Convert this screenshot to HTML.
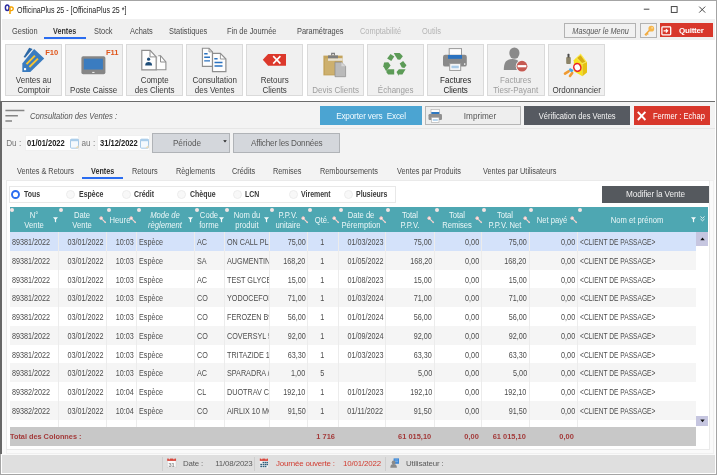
<!DOCTYPE html><html><head><meta charset="utf-8"><title>OfficinaPlus 25</title><style>*{box-sizing:border-box;margin:0;padding:0}
html,body{width:717px;height:475px;overflow:hidden;background:#fff;font-family:"Liberation Sans",sans-serif;}
body{position:relative;font-size:8px;color:#444;will-change:transform}
.abs{position:absolute}
.t{position:absolute;white-space:nowrap;line-height:10px}
/* window frame */
#frame{position:absolute;left:0;top:0;width:717px;height:475px;border:1px solid #a4a4a4;pointer-events:none;z-index:50}
#lbar{position:absolute;left:0;top:101px;width:1.600px;height:353px;background:#686868;z-index:51}
#title{position:absolute;left:17px;top:5px;transform:scaleX(.82);transform-origin:0 50%;font-size:8.6px;color:#222;line-height:11px;white-space:nowrap}
#menubar{position:absolute;left:2px;top:19px;width:713px;height:21.200px;background:#f0f0f0}
.mt{position:absolute;top:25.800px;transform:scaleX(.885);transform-origin:0 50%;font-size:8.4px;color:#4a4a4a;line-height:11px;white-space:nowrap}
.mt.dis{color:#b4b4b4}
.tb{position:absolute;top:43.600px;width:57.300px;height:52.700px;background:#f0f0f0;border:1px solid #dadada}
.tb .lb{position:absolute;left:-10px;right:-10px;text-align:center;font-size:9.3px;line-height:9.9px;color:#3a3a3a;white-space:nowrap;transform:scaleX(.86)}
.tb.dis .lb{color:#9d9d9d}
.tb svg{position:absolute}
.fk{position:absolute;right:3px;top:4.5px;font-size:7.6px;font-weight:bold;color:#e0561b;line-height:8px}
#child{position:absolute;left:1px;top:101px;width:714px;height:354px;background:#f3f3f3;border-top:1px solid #6b6b6b}
.btn{position:absolute;text-align:center;white-space:nowrap;font-size:8.3px}
.row{position:absolute;left:9.5px;width:686px}
.row.sel{background:#d4e2fa}
.row.alt{background:#f5f5f5}
.row.wh{background:#fff}
.cell{position:absolute;top:0;height:100%;line-height:20.6px;font-size:8.3px;color:#4c4c4c;white-space:nowrap;overflow:hidden}
.cell.c{text-align:center}
.cell.l{text-align:left;padding-left:2.8px}
.cell.r{text-align:right;padding-right:1.9px}
.cell.clip{overflow:hidden}
.vsep{position:absolute;width:1px;background:#ececec}
.hd{position:absolute;top:207.3px;height:24.6px;color:#eaf6f7;font-size:8.3px;line-height:10.4px;text-align:center;white-space:nowrap}
.hd span{display:block;transform:scaleX(.92)}
.dot{position:absolute;top:208.100px;width:4px;height:4px;border-radius:50%;background:#f4e4e4}
.radio{position:absolute;top:189.9px;width:8.6px;height:8.6px;border-radius:50%;border:1px solid #e9e9e9;background:#fbfbfb}
.radio.on{border:2px solid #2d6df0;background:#fff}
.rl{position:absolute;top:190px;transform:scaleX(.85);transform-origin:0 50%;font-size:8.2px;font-weight:bold;color:#3a3a3a;line-height:10px;white-space:nowrap}
.st{position:absolute;top:458.700px;letter-spacing:-0.15px;font-size:7.9px;line-height:10px;color:#5a5a5a;white-space:nowrap}
.st.red{color:#d13b2f}
.tab{position:absolute;top:166.100px;transform:scaleX(.875);transform-origin:0 50%;font-size:8.4px;line-height:11px;color:#4a4a4a;white-space:nowrap}
.tot{font-size:8px;font-weight:bold;color:#a33a3a}

.cell i{display:inline-block;font-style:normal;transform:scaleX(.87);white-space:nowrap}
.cell.l i{transform-origin:0 50%}
.cell.r i{transform-origin:100% 50%}
.cell.c i{transform-origin:50% 50%}
</style></head><body>
<div id="menubar"></div>
<!-- title bar -->
<svg class="abs" style="left:3px;top:3px" width="13" height="13" viewBox="3 3 13 13"><ellipse cx="7.250" cy="7.700" rx="1.850" ry="2.750" fill="none" stroke="#2a2a9e" stroke-width="1.500"/><path d="M10 13.900V7.200" stroke="#f5a300" stroke-width="1.500" fill="none"/><path d="M10 7h1.400a1.800 1.800 0 0 1 0 3.600H10" stroke="#f5a300" stroke-width="1.400" fill="none"/></svg>
<div id="title">OfficinaPlus 25 - [OfficinaPlus 25 *]</div>
<svg class="abs" style="left:640px;top:3px" width="70" height="14" viewBox="0 0 70 14"><path d="M3.8 6.2h5.6" stroke="#333" stroke-width="0.9"/><rect x="31.3" y="3.6" width="5.8" height="5.8" fill="none" stroke="#333" stroke-width="0.9"/><path d="M59.2 3.6l6 6M65.2 3.6l-6 6" stroke="#333" stroke-width="0.9"/></svg>
<!-- menu tabs -->
<div class="mt" style="left:11.5px">Gestion</div>
<div class="mt" style="left:53px;font-weight:bold;color:#3a3a3a;transform:scaleX(.86)">Ventes</div>
<div class="abs" style="left:44px;top:37.4px;width:41.5px;height:2.1px;background:#2a6cf0"></div>
<div class="mt" style="left:93.6px">Stock</div>
<div class="mt" style="left:129.6px">Achats</div>
<div class="mt" style="left:169px">Statistiques</div>
<div class="mt" style="left:227px">Fin de Journée</div>
<div class="mt" style="left:297px">Paramétrages</div>
<div class="mt dis" style="left:360px">Comptabilité</div>
<div class="mt dis" style="left:422px">Outils</div>
<div class="btn" style="left:564px;top:23px;width:72.3px;height:14.8px;background:#f1f1f1;border:1px solid #b2b2b2;font-style:italic;color:#555;line-height:14.9px;font-size:8.7px"><span style="display:inline-block;transform:scaleX(.84)">Masquer le Menu</span></div>
<div class="btn" style="left:640px;top:23px;width:16.6px;height:14.8px;background:#f1f1f1;border:1px solid #b2b2b2"><svg class="abs" style="left:1.500px;top:1px" width="12" height="12" viewBox="0 0 12 12"><circle cx="8.300" cy="3.700" r="2.900" fill="#f6b64c"/><circle cx="9.100" cy="2.900" r=".8" fill="#fbe3b4"/><path d="M6.400 5.600L1.900 10.100M3.900 8.200l1.400 1.300M2.600 9.400l1 1" stroke="#f2a838" stroke-width="1.400" fill="none"/></svg></div>
<div class="btn" style="left:659.6px;top:22.6px;width:53.3px;height:14.8px;background:#d8372b;color:#fff;font-weight:bold;line-height:15.2px;font-size:8px;letter-spacing:-0.25px;text-align:left;padding-left:19.5px">Quitter<svg class="abs" style="left:1.800px;top:3px" width="11" height="10" viewBox="0 0 11 10"><rect x=".9" y=".9" width="8.800" height="7.900" rx=".8" fill="none" stroke="#fff" stroke-width="1.300"/><path d="M2.600 4.850h3.800M4.900 3.100l1.800 1.750-1.800 1.750" fill="none" stroke="#fff" stroke-width="1.100"/></svg></div>
<!-- toolbar buttons -->
<div class="tb" style="left:5px"><span class="fk">F10</span>
 <div class="lb" style="top:31.100px">Ventes au<br>Comptoir</div></div>
<div class="tb" style="left:65.3px"><span class="fk">F11</span>
 <div class="lb" style="top:41px">Poste Caisse</div></div>
<div class="tb" style="left:125.6px">
 <div class="lb" style="top:31.100px">Compte<br>des Clients</div></div>
<div class="tb" style="left:185.9px">
 <div class="lb" style="top:31.100px">Consultation<br>des Ventes</div></div>
<div class="tb" style="left:246.2px">
 <div class="lb" style="top:31.100px">Retours<br>Clients</div></div>
<div class="tb dis" style="left:306.5px">
 <div class="lb" style="top:41px">Devis Clients</div></div>
<div class="tb dis" style="left:366.8px">
 <div class="lb" style="top:41px">Échanges</div></div>
<div class="tb" style="left:427.1px">
 <div class="lb" style="top:31.100px;color:#222">Factures<br>Clients</div></div>
<div class="tb dis" style="left:487.4px">
 <div class="lb" style="top:31.100px">Factures<br>Tiesr-Payant</div></div>
<div class="tb" style="left:547.7px">
 <div class="lb" style="top:41px">Ordonnancier</div></div>
<svg class="abs" style="left:0;top:0" width="717" height="100" viewBox="0 0 717 100">
<!-- tag -->
<path d="M29.200 47.800l3.400 1.100-7.500 8.800-1.500-.6z" fill="#2c68a6"/>
<path d="M34.100 48.900L44.200 58.600 30.300 72.100H22.300V63.600z" fill="#3a7cc0"/>
<rect x="24" y="68.100" width="2.100" height="2.100" fill="#fff"/>
<path d="M26.500 64.100L34.900 55.600M29.400 67L37.900 58.600" stroke="#f7c331" stroke-width="2"/>
<!-- monitor -->
<rect x="81.400" y="56.200" width="24" height="18" rx="1.800" fill="#868686"/>
<rect x="83.800" y="58.700" width="19.100" height="10.800" fill="#3a7cc0"/>
<rect x="92.200" y="71.900" width="2.300" height="1.100" fill="#e8e8e8"/>
<!-- compte des clients -->
<path d="M158.300 55.700h2.300l5.300 6.200v7.900h-9.700" fill="#fdfdfd" stroke="#8e8e8e" stroke-width="1.100"/>
<path d="M160.500 55.700v6.300h5.400" fill="none" stroke="#8e8e8e" stroke-width="1"/>
<path d="M141.800 50.400h8.300l6.100 6.500v12.900h-14.400z" fill="#fdfdfd" stroke="#8e8e8e" stroke-width="1.200"/>
<path d="M150 50.400v6.500h6.200" fill="none" stroke="#8e8e8e" stroke-width="1"/>
<circle cx="148.600" cy="59.200" r="1.600" fill="#1f4e79"/>
<path d="M145.200 65.400c0-2.400 1.400-3.400 3.400-3.400s3.500 1 3.500 3.400z" fill="#1f4e79"/>
<!-- consultation -->
<path d="M202.400 48.300h6.600l3.500 3.600v14.500h-10.100z" fill="#fdfdfd" stroke="#8e8e8e" stroke-width="1.100"/>
<path d="M209 48.300v3.600h3.500" fill="none" stroke="#8e8e8e" stroke-width=".9"/>
<path d="M204.200 53.700h3.400M204.200 57.300h5.800M204.200 60.900h5.800" stroke="#2a72c0" stroke-width="1.400"/>
<path d="M212.500 53.400h7.900l5.500 5.600v12.600h-13.400z" fill="#fdfdfd" stroke="#8e8e8e" stroke-width="1.200"/>
<path d="M220.400 53.400v5.600h5.500" fill="none" stroke="#8e8e8e" stroke-width=".9"/>
<path d="M214.300 58.800h3.300M214.500 62.500h8M214.500 66h8" stroke="#2a72c0" stroke-width="1.500"/>
<!-- retours -->
<path d="M262.800 59.800L268.100 54H286v11.800h-17.900z" fill="#dc382b"/>
<path d="M273.200 56.100l7.200 7.500M280.400 56.100l-7.200 7.500" stroke="#fff" stroke-width="1.600"/>
<!-- devis (clipboard) -->
<rect x="323.400" y="55.600" width="19.200" height="19.800" fill="#c4a45c"/>
<rect x="325" y="58.400" width="9.500" height="16" fill="#cdb06e"/>
<rect x="328" y="58.200" width="14.600" height="2.600" fill="#e9e3d3"/>
<rect x="328" y="55.400" width="10" height="2.900" fill="#7e7e7e"/>
<path d="M331.700 55.400v-2.100h2.700v2.100" fill="none" stroke="#7e7e7e" stroke-width="1.200"/>
<path d="M335 62.200h6.400l4.200 4v10.500H335z" fill="#bababa" stroke="#929292" stroke-width=".8"/>
<path d="M341.400 62.200v4h4.200z" fill="#d6d6d6"/>
<!-- recycle -->
<g fill="#5c9b57">
<path d="M387.100 58.600l3.400-4.700 3.800 2.600-3 4.600z"/>
<path d="M393.800 53.100h5.900l3.200 3.200-2.800 3.500-2.500-.4-2.500-3.800z"/>
<path d="M403.100 61.100l3.400 4.200-2.100 2.600-2.600-.5-2.100-3.800z"/>
<path d="M396.500 72.100l2.400-2.800h6.700l-3.200 5.100h-3.700v1.700z"/>
<path d="M387.700 69.300h6.500v5.300h-6.100l-1.900-2.500z"/>
<path d="M383.300 66.200l.8-3.600 4.200-.4 2.300 3.400-4.400 5.600z"/>
</g>
<!-- printer -->
<rect x="449.200" y="48.600" width="12.300" height="7" fill="#fdfdfd" stroke="#9a9a9a" stroke-width="1"/>
<rect x="443" y="54.800" width="23.800" height="11.800" rx="2.200" fill="#898989"/>
<rect x="448" y="55" width="14" height="3.800" fill="#2a72c0"/>
<rect x="449.700" y="63.600" width="11" height="6.800" fill="#fdfdfd" stroke="#9a9a9a" stroke-width="1"/>
<rect x="451.400" y="65.600" width="7.400" height="2.700" fill="#a9cbe8"/>
<circle cx="464.700" cy="64.100" r=".8" fill="#fff"/>
<!-- person blocked -->
<ellipse cx="514.400" cy="53.100" rx="5.100" ry="5.700" fill="#8a8a8a"/>
<path d="M503.800 70.100c0-7.400 2.200-11 8.500-11s8.500 3.600 8.500 11z" fill="#8a8a8a"/>
<circle cx="522" cy="66.200" r="6.200" fill="#f5f5f5"/>
<circle cx="522" cy="66.200" r="5.400" fill="#c65a52"/>
<rect x="517.600" y="65.100" width="8.700" height="2.200" fill="#fff"/>
<!-- ordonnancier -->
<path d="M576.100 57.700l4.600-4.200 6.300 8.400-4.600 2.100z" fill="#fbea4e"/>
<path d="M577.200 58.100l3.300-2.800 4.800 6.400-3.300 1.400z" fill="#d8ac14"/>
<path d="M573.800 60.300l2.300-2.600 6.300 6.300v12.300l-8.600-5.100z" fill="#f7e21e"/>
<path d="M582.400 64l4.600-2.100v10.600l-4.600 3.800z" fill="#e6c212"/>
<ellipse cx="577.300" cy="67.400" rx="3.500" ry="3.900" fill="#fff" stroke="#e8222a" stroke-width="1.500" transform="rotate(-20 577.300 67.400)"/>
<rect x="566.200" y="56.900" width="4.600" height="7.100" rx="1" fill="#8c8468"/>
<rect x="567.500" y="53.800" width="2" height="3.600" rx=".6" fill="#4a4a4a"/>
<path d="M569.200 69.300l3.600 2" stroke="#45a9e8" stroke-width="3"/>
<path d="M565 73.600l3.600-2.200" stroke="#f09a30" stroke-width="2.600" stroke-linecap="round"/>
<path d="M570 76l2.200-3" stroke="#f09a30" stroke-width="2.600" stroke-linecap="round"/>
</svg>
<!-- MDI child -->
<div id="child"></div>
<svg class="abs" style="left:5px;top:108px" width="22" height="16" viewBox="0 0 22 16"><path d="M.4 2.600h19M.4 7.800h12.500M.4 12.900h6.600" stroke="#858585" stroke-width="1.500"/></svg>
<div class="t" style="left:30px;top:110.5px;font-style:italic;font-size:8.3px;color:#555;transform:scaleX(.925);transform-origin:0 50%">Consultation des Ventes :</div>
<div class="btn" style="left:320px;top:106.4px;width:102px;height:19.100px;background:#4ba4d2;color:#f2fbff;line-height:21.4px;font-size:8.2px;letter-spacing:-0.18px">Exporter vers&nbsp; Excel</div>
<div class="btn" style="left:425.2px;top:106.4px;width:95.6px;height:19.100px;background:#eeeeee;border:1px solid #b6b6b6;color:#555;line-height:19.4px;font-size:8.2px;padding-left:14px">Imprimer
 <svg class="abs" style="left:2px;top:1.500px" width="15" height="14" viewBox="0 0 15 14"><rect x="3" y=".5" width="8.500" height="5" fill="#fff" stroke="#aaa" stroke-width=".6"/><rect x="3.300" y="3" width="8" height="2.200" fill="#2f79c2"/><rect x=".5" y="5" width="13.500" height="6" rx="1.200" fill="#909090"/><rect x="3.500" y="8.500" width="7.500" height="5" fill="#fff" stroke="#aaa" stroke-width=".6"/><rect x="4.800" y="10" width="5" height="2" fill="#b9d6ee"/></svg></div>
<div class="btn" style="left:524px;top:106.4px;width:106.4px;height:19.100px;background:#565a61;color:#f0f0f0;line-height:21.4px;font-size:8.7px;color:#f6f6f6"><span style="display:inline-block;transform:scaleX(.87)">Vérification des Ventes</span></div>
<div class="btn" style="left:634px;top:106.4px;width:76.3px;height:19.100px;background:#d8372b;color:#fff;line-height:21.4px;font-size:8.7px;padding-left:13px"><span style="display:inline-block;transform:scaleX(.87)">Fermer : Echap</span>
 <svg class="abs" style="left:2.500px;top:5px" width="10" height="10" viewBox="0 0 10 10"><path d="M.8.8l7.600 8.200M8.400.8L.8 9" stroke="#fff" stroke-width="1.900"/></svg></div>
<div class="abs" style="left:2px;top:128px;width:713px;height:1px;background:#e6e6e6"></div>
<!-- date row -->
<div class="t" style="left:6.200px;top:138.5px;font-size:8.2px;color:#777">Du :</div>
<div class="abs" style="left:25.300px;top:135.2px;width:54px;height:16.300px;background:#fff;border:1px solid #f0f0f0"></div>
<div class="t" style="left:27px;top:138.3px;font-size:8.4px;color:#222;font-weight:bold;transform:scaleX(.9);transform-origin:0 50%">01/01/2022</div>
<svg class="abs cal" style="left:69.500px;top:138px" width="9" height="11" viewBox="0 0 9 11"><rect x=".5" y="1.200" width="8" height="9" rx="1" fill="#f4f9fd" stroke="#9cc3e3" stroke-width=".9"/><rect x=".5" y="1.200" width="8" height="2" fill="#a9cdea"/><path d="M5 10.200l3.500-3v3z" fill="#eddcb8"/></svg>
<div class="t" style="left:81.500px;top:138.5px;font-size:8.2px;color:#777">au :</div>
<div class="abs" style="left:97px;top:135.2px;width:53px;height:16.300px;background:#fff;border:1px solid #f0f0f0"></div>
<div class="t" style="left:99.500px;top:138.3px;font-size:8.4px;color:#222;font-weight:bold;transform:scaleX(.9);transform-origin:0 50%">31/12/2022</div>
<svg class="abs cal" style="left:139.500px;top:138px" width="9" height="11" viewBox="0 0 9 11"><rect x=".5" y="1.200" width="8" height="9" rx="1" fill="#f4f9fd" stroke="#9cc3e3" stroke-width=".9"/><rect x=".5" y="1.200" width="8" height="2" fill="#a9cdea"/><path d="M5 10.200l3.500-3v3z" fill="#eddcb8"/></svg>
<div class="btn" style="left:152px;top:133px;width:78px;height:19.700px;background:#d4d7dc;border:1px solid #b0b3b7;color:#5a5a5a;line-height:19.9px;font-size:8.2px;padding-right:8px">Période<svg class="abs" style="right:2.300px;top:6.200px" width="4" height="3" viewBox="0 0 4 3"><path d="M.2.3h3.600L2 2.500z" fill="#222"/></svg></div>
<div class="btn" style="left:233.4px;top:133px;width:106.6px;height:19.700px;background:#d4d7dc;border:1px solid #b0b3b7;color:#5a5a5a;line-height:19.9px;font-size:8.2px;letter-spacing:-0.2px">Afficher les Données</div>
<!-- tabs -->
<div class="tab" style="left:17px">Ventes &amp; Retours</div>
<div class="tab" style="left:91px;font-weight:bold;color:#333;transform:scaleX(.86)">Ventes</div>
<div class="abs" style="left:82px;top:177.4px;width:41.400px;height:2.100px;background:#2a6cf0"></div>
<div class="tab" style="left:132px">Retours</div>
<div class="tab" style="left:175.5px">Règlements</div>
<div class="tab" style="left:231.5px">Crédits</div>
<div class="tab" style="left:273px">Remises</div>
<div class="tab" style="left:319.5px">Remboursements</div>
<div class="tab" style="left:397px">Ventes par Produits</div>
<div class="tab" style="left:483px">Ventes par Utilisateurs</div>
<!-- tab panel -->
<div class="abs" style="left:1.300px;top:179.500px;width:714px;height:276px;background:#fafafa"></div><div class="abs" style="left:5.500px;top:179.500px;width:708.500px;height:274px;border:1px solid #f0f0f0"></div><div class="abs" style="left:6px;top:180px;width:704px;height:270px;background:#fff;border:1px solid #eaeaea"></div>
<div class="abs" style="left:9.300px;top:186.3px;width:387.200px;height:16.600px;border:1px solid #e8e8e8;background:#fff"></div>
<svg class="abs" style="left:10.2px;top:188.6px" width="11" height="11" viewBox="0 0 11 11"><circle cx="5.500" cy="5.500" r="3.500" fill="#fff" stroke="#2d6df0" stroke-width="1.900"/></svg><div class="rl" style="left:23.500px">Tous</div>
<svg class="abs" style="left:65.0px;top:188.6px" width="11" height="11" viewBox="0 0 11 11"><circle cx="5.500" cy="5.500" r="4" fill="#f8f8f8" stroke="#ededed" stroke-width="1"/></svg><div class="rl" style="left:79px">Espèce</div>
<svg class="abs" style="left:121.3px;top:188.6px" width="11" height="11" viewBox="0 0 11 11"><circle cx="5.500" cy="5.500" r="4" fill="#f8f8f8" stroke="#ededed" stroke-width="1"/></svg><div class="rl" style="left:134px">Crédit</div>
<svg class="abs" style="left:176.1px;top:188.6px" width="11" height="11" viewBox="0 0 11 11"><circle cx="5.500" cy="5.500" r="4" fill="#f8f8f8" stroke="#ededed" stroke-width="1"/></svg><div class="rl" style="left:189.500px">Chèque</div>
<svg class="abs" style="left:232.1px;top:188.6px" width="11" height="11" viewBox="0 0 11 11"><circle cx="5.500" cy="5.500" r="4" fill="#f8f8f8" stroke="#ededed" stroke-width="1"/></svg><div class="rl" style="left:244.800px">LCN</div>
<svg class="abs" style="left:287.7px;top:188.6px" width="11" height="11" viewBox="0 0 11 11"><circle cx="5.500" cy="5.500" r="4" fill="#f8f8f8" stroke="#ededed" stroke-width="1"/></svg><div class="rl" style="left:300.500px">Virement</div>
<svg class="abs" style="left:342.5px;top:188.6px" width="11" height="11" viewBox="0 0 11 11"><circle cx="5.500" cy="5.500" r="4" fill="#f8f8f8" stroke="#ededed" stroke-width="1"/></svg><div class="rl" style="left:356px">Plusieurs</div>
<div class="btn" style="left:602.4px;top:186.4px;width:106.200px;height:16.400px;background:#55595e;color:#f0f0f0;line-height:18.8px;font-size:8.2px;letter-spacing:-0.12px">Modifier la Vente</div>
<!-- header -->
<div class="abs" style="left:9.500px;top:207.3px;width:698.800px;height:24.700px;background:#4ea7b2"></div>

<div class="hd" style="left:-6.5px;width:80px;padding-top:2.4px;"><span>N°</span><span>Vente</span></div>
<svg class="abs" style="left:52.8px;top:217.200px" width="5" height="6" viewBox="0 0 5 6"><path d="M0 .2h5L3.100 2.600v3L1.900 4.800V2.600z" fill="#f4fbfb"/></svg>
<div class="hd" style="left:42.0px;width:80px;padding-top:2.4px;"><span>Date</span><span>Vente</span></div>
<svg class="abs" style="left:99.2px;top:216.2px" width="8" height="8" viewBox="0 0 8 8"><circle cx="2.200" cy="2.200" r="1.400" fill="#fbeeee" stroke="#f2c3c0" stroke-width="1"/><path d="M3.300 3.300L6.800 6.800" stroke="#f6dcda" stroke-width="1.150" fill="none"/><path d="M5.300 6.300l1-1" stroke="#f2c3c0" stroke-width="1.100" fill="none"/></svg>
<div class="hd" style="left:80.2px;width:80px;padding-top:7.4px;"><span>Heure</span></div>
<svg class="abs" style="left:129.2px;top:216.2px" width="8" height="8" viewBox="0 0 8 8"><circle cx="2.200" cy="2.200" r="1.400" fill="#fbeeee" stroke="#f2c3c0" stroke-width="1"/><path d="M3.300 3.300L6.800 6.800" stroke="#f6dcda" stroke-width="1.150" fill="none"/><path d="M5.300 6.300l1-1" stroke="#f2c3c0" stroke-width="1.100" fill="none"/></svg>
<div class="hd" style="left:125.0px;width:80px;padding-top:2.4px;font-style:italic;"><span>Mode de</span><span>règlement</span></div>
<svg class="abs" style="left:188.0px;top:217.200px" width="5" height="6" viewBox="0 0 5 6"><path d="M0 .2h5L3.100 2.600v3L1.900 4.800V2.600z" fill="#f4fbfb"/></svg>
<div class="hd" style="left:169.0px;width:80px;padding-top:2.4px;"><span>Code</span><span>forme</span></div>
<svg class="abs" style="left:218.5px;top:217.200px" width="5" height="6" viewBox="0 0 5 6"><path d="M0 .2h5L3.100 2.600v3L1.900 4.800V2.600z" fill="#f4fbfb"/></svg>
<div class="hd" style="left:206.8px;width:80px;padding-top:2.4px;"><span>Nom du</span><span>produit</span></div>
<svg class="abs" style="left:263.8px;top:217.200px" width="5" height="6" viewBox="0 0 5 6"><path d="M0 .2h5L3.100 2.600v3L1.900 4.800V2.600z" fill="#f4fbfb"/></svg>
<div class="hd" style="left:248.0px;width:80px;padding-top:2.4px;"><span>P.P.V.</span><span>unitaire</span></div>
<svg class="abs" style="left:300.8px;top:216.2px" width="8" height="8" viewBox="0 0 8 8"><circle cx="2.200" cy="2.200" r="1.400" fill="#fbeeee" stroke="#f2c3c0" stroke-width="1"/><path d="M3.300 3.300L6.800 6.800" stroke="#f6dcda" stroke-width="1.150" fill="none"/><path d="M5.300 6.300l1-1" stroke="#f2c3c0" stroke-width="1.100" fill="none"/></svg>
<div class="hd" style="left:282.0px;width:80px;padding-top:7.4px;"><span>Qté.</span></div>
<svg class="abs" style="left:332.2px;top:216.2px" width="8" height="8" viewBox="0 0 8 8"><circle cx="2.200" cy="2.200" r="1.400" fill="#fbeeee" stroke="#f2c3c0" stroke-width="1"/><path d="M3.300 3.300L6.800 6.800" stroke="#f6dcda" stroke-width="1.150" fill="none"/><path d="M5.300 6.300l1-1" stroke="#f2c3c0" stroke-width="1.100" fill="none"/></svg>
<div class="hd" style="left:321.0px;width:80px;padding-top:2.4px;"><span>Date de</span><span>Péremption</span></div>
<svg class="abs" style="left:379.2px;top:216.2px" width="8" height="8" viewBox="0 0 8 8"><circle cx="2.200" cy="2.200" r="1.400" fill="#fbeeee" stroke="#f2c3c0" stroke-width="1"/><path d="M3.300 3.300L6.800 6.800" stroke="#f6dcda" stroke-width="1.150" fill="none"/><path d="M5.300 6.300l1-1" stroke="#f2c3c0" stroke-width="1.100" fill="none"/></svg>
<div class="hd" style="left:369.5px;width:80px;padding-top:2.4px;"><span>Total</span><span>P.P.V.</span></div>
<svg class="abs" style="left:427.2px;top:216.2px" width="8" height="8" viewBox="0 0 8 8"><circle cx="2.200" cy="2.200" r="1.400" fill="#fbeeee" stroke="#f2c3c0" stroke-width="1"/><path d="M3.300 3.300L6.800 6.800" stroke="#f6dcda" stroke-width="1.150" fill="none"/><path d="M5.300 6.300l1-1" stroke="#f2c3c0" stroke-width="1.100" fill="none"/></svg>
<div class="hd" style="left:417.0px;width:80px;padding-top:2.4px;"><span>Total</span><span>Remises</span></div>
<svg class="abs" style="left:475.2px;top:216.2px" width="8" height="8" viewBox="0 0 8 8"><circle cx="2.200" cy="2.200" r="1.400" fill="#fbeeee" stroke="#f2c3c0" stroke-width="1"/><path d="M3.300 3.300L6.800 6.800" stroke="#f6dcda" stroke-width="1.150" fill="none"/><path d="M5.300 6.300l1-1" stroke="#f2c3c0" stroke-width="1.100" fill="none"/></svg>
<div class="hd" style="left:465.0px;width:80px;padding-top:2.4px;"><span>Total</span><span>P.P.V. Net</span></div>
<svg class="abs" style="left:522.7px;top:216.2px" width="8" height="8" viewBox="0 0 8 8"><circle cx="2.200" cy="2.200" r="1.400" fill="#fbeeee" stroke="#f2c3c0" stroke-width="1"/><path d="M3.300 3.300L6.800 6.800" stroke="#f6dcda" stroke-width="1.150" fill="none"/><path d="M5.300 6.300l1-1" stroke="#f2c3c0" stroke-width="1.100" fill="none"/></svg>
<div class="hd" style="left:512.0px;width:80px;padding-top:7.4px;"><span>Net payé</span></div>
<svg class="abs" style="left:570.2px;top:216.2px" width="8" height="8" viewBox="0 0 8 8"><circle cx="2.200" cy="2.200" r="1.400" fill="#fbeeee" stroke="#f2c3c0" stroke-width="1"/><path d="M3.300 3.300L6.800 6.800" stroke="#f6dcda" stroke-width="1.150" fill="none"/><path d="M5.300 6.300l1-1" stroke="#f2c3c0" stroke-width="1.100" fill="none"/></svg>
<div class="hd" style="left:596.5px;width:80px;padding-top:7.4px;"><span>Nom et prénom</span></div>
<svg class="abs" style="left:690.5px;top:217.200px" width="5" height="6" viewBox="0 0 5 6"><path d="M0 .2h5L3.100 2.600v3L1.900 4.800V2.600z" fill="#f4fbfb"/></svg>
<svg class="abs" style="left:699.800px;top:215.900px" width="5" height="6" viewBox="0 0 5 6"><path d="M.5.500L2.500 2.300 4.500.500M.5 3L2.500 4.800 4.500 3" fill="none" stroke="#f4fbfb" stroke-width=".9"/></svg>
<div class="dot" style="left:10.2px"></div>
<div class="dot" style="left:59.1px"></div>
<div class="dot" style="left:106.5px"></div>
<div class="dot" style="left:136.7px"></div>
<div class="dot" style="left:194.5px"></div>
<div class="dot" style="left:224.6px"></div>
<div class="dot" style="left:269.7px"></div>
<div class="dot" style="left:307.9px"></div>
<div class="dot" style="left:339.1px"></div>
<div class="dot" style="left:386.0px"></div>
<div class="dot" style="left:434.7px"></div>
<div class="dot" style="left:482.0px"></div>
<div class="dot" style="left:529.3px"></div>
<div class="dot" style="left:577.6px"></div>
<div class="row sel" style="top:232.00px;height:18.76px">
<span class="cell l" style="left:0.0px;width:48.9px"><i>89381/2022</i></span>
<span class="cell r" style="left:48.9px;width:47.4px"><i>03/01/2022</i></span>
<span class="cell r" style="left:96.3px;width:30.2px"><i>10:03</i></span>
<span class="cell l" style="left:126.5px;width:57.8px"><i>Espèce</i></span>
<span class="cell l" style="left:184.3px;width:30.1px"><i>AC</i></span>
<span class="cell l clip" style="left:214.4px;width:45.1px"><i>ON CALL PLI</i></span>
<span class="cell r" style="left:259.5px;width:38.2px"><i>75,00</i></span>
<span class="cell c" style="left:297.7px;width:31.2px"><i>1</i></span>
<span class="cell r" style="left:328.9px;width:46.9px"><i>01/03/2023</i></span>
<span class="cell r" style="left:375.8px;width:48.7px"><i>75,00</i></span>
<span class="cell r" style="left:424.5px;width:47.3px"><i>0,00</i></span>
<span class="cell r" style="left:471.8px;width:47.3px"><i>75,00</i></span>
<span class="cell r" style="left:519.1px;width:48.3px"><i>0,00</i></span>
<span class="cell l" style="left:567.4px;width:118.6px"><i style="transform:scaleX(.80)">&lt;CLIENT DE PASSAGE&gt;</i></span>
</div>
<div class="row alt" style="top:250.76px;height:18.76px">
<span class="cell l" style="left:0.0px;width:48.9px"><i>89381/2022</i></span>
<span class="cell r" style="left:48.9px;width:47.4px"><i>03/01/2022</i></span>
<span class="cell r" style="left:96.3px;width:30.2px"><i>10:03</i></span>
<span class="cell l" style="left:126.5px;width:57.8px"><i>Espèce</i></span>
<span class="cell l" style="left:184.3px;width:30.1px"><i>SA</i></span>
<span class="cell l clip" style="left:214.4px;width:45.1px"><i>AUGMENTIN</i></span>
<span class="cell r" style="left:259.5px;width:38.2px"><i>168,20</i></span>
<span class="cell c" style="left:297.7px;width:31.2px"><i>1</i></span>
<span class="cell r" style="left:328.9px;width:46.9px"><i>01/05/2022</i></span>
<span class="cell r" style="left:375.8px;width:48.7px"><i>168,20</i></span>
<span class="cell r" style="left:424.5px;width:47.3px"><i>0,00</i></span>
<span class="cell r" style="left:471.8px;width:47.3px"><i>168,20</i></span>
<span class="cell r" style="left:519.1px;width:48.3px"><i>0,00</i></span>
<span class="cell l" style="left:567.4px;width:118.6px"><i style="transform:scaleX(.80)">&lt;CLIENT DE PASSAGE&gt;</i></span>
</div>
<div class="row wh" style="top:269.52px;height:18.76px">
<span class="cell l" style="left:0.0px;width:48.9px"><i>89381/2022</i></span>
<span class="cell r" style="left:48.9px;width:47.4px"><i>03/01/2022</i></span>
<span class="cell r" style="left:96.3px;width:30.2px"><i>10:03</i></span>
<span class="cell l" style="left:126.5px;width:57.8px"><i>Espèce</i></span>
<span class="cell l" style="left:184.3px;width:30.1px"><i>AC</i></span>
<span class="cell l clip" style="left:214.4px;width:45.1px"><i>TEST GLYCE</i></span>
<span class="cell r" style="left:259.5px;width:38.2px"><i>15,00</i></span>
<span class="cell c" style="left:297.7px;width:31.2px"><i>1</i></span>
<span class="cell r" style="left:328.9px;width:46.9px"><i>01/08/2023</i></span>
<span class="cell r" style="left:375.8px;width:48.7px"><i>15,00</i></span>
<span class="cell r" style="left:424.5px;width:47.3px"><i>0,00</i></span>
<span class="cell r" style="left:471.8px;width:47.3px"><i>15,00</i></span>
<span class="cell r" style="left:519.1px;width:48.3px"><i>0,00</i></span>
<span class="cell l" style="left:567.4px;width:118.6px"><i style="transform:scaleX(.80)">&lt;CLIENT DE PASSAGE&gt;</i></span>
</div>
<div class="row alt" style="top:288.28px;height:18.76px">
<span class="cell l" style="left:0.0px;width:48.9px"><i>89381/2022</i></span>
<span class="cell r" style="left:48.9px;width:47.4px"><i>03/01/2022</i></span>
<span class="cell r" style="left:96.3px;width:30.2px"><i>10:03</i></span>
<span class="cell l" style="left:126.5px;width:57.8px"><i>Espèce</i></span>
<span class="cell l" style="left:184.3px;width:30.1px"><i>CO</i></span>
<span class="cell l clip" style="left:214.4px;width:45.1px"><i>YODOCEFOL</i></span>
<span class="cell r" style="left:259.5px;width:38.2px"><i>71,00</i></span>
<span class="cell c" style="left:297.7px;width:31.2px"><i>1</i></span>
<span class="cell r" style="left:328.9px;width:46.9px"><i>01/03/2024</i></span>
<span class="cell r" style="left:375.8px;width:48.7px"><i>71,00</i></span>
<span class="cell r" style="left:424.5px;width:47.3px"><i>0,00</i></span>
<span class="cell r" style="left:471.8px;width:47.3px"><i>71,00</i></span>
<span class="cell r" style="left:519.1px;width:48.3px"><i>0,00</i></span>
<span class="cell l" style="left:567.4px;width:118.6px"><i style="transform:scaleX(.80)">&lt;CLIENT DE PASSAGE&gt;</i></span>
</div>
<div class="row wh" style="top:307.04px;height:18.76px">
<span class="cell l" style="left:0.0px;width:48.9px"><i>89381/2022</i></span>
<span class="cell r" style="left:48.9px;width:47.4px"><i>03/01/2022</i></span>
<span class="cell r" style="left:96.3px;width:30.2px"><i>10:03</i></span>
<span class="cell l" style="left:126.5px;width:57.8px"><i>Espèce</i></span>
<span class="cell l" style="left:184.3px;width:30.1px"><i>CO</i></span>
<span class="cell l clip" style="left:214.4px;width:45.1px"><i>FEROZEN B9</i></span>
<span class="cell r" style="left:259.5px;width:38.2px"><i>56,00</i></span>
<span class="cell c" style="left:297.7px;width:31.2px"><i>1</i></span>
<span class="cell r" style="left:328.9px;width:46.9px"><i>01/01/2024</i></span>
<span class="cell r" style="left:375.8px;width:48.7px"><i>56,00</i></span>
<span class="cell r" style="left:424.5px;width:47.3px"><i>0,00</i></span>
<span class="cell r" style="left:471.8px;width:47.3px"><i>56,00</i></span>
<span class="cell r" style="left:519.1px;width:48.3px"><i>0,00</i></span>
<span class="cell l" style="left:567.4px;width:118.6px"><i style="transform:scaleX(.80)">&lt;CLIENT DE PASSAGE&gt;</i></span>
</div>
<div class="row alt" style="top:325.80px;height:18.76px">
<span class="cell l" style="left:0.0px;width:48.9px"><i>89381/2022</i></span>
<span class="cell r" style="left:48.9px;width:47.4px"><i>03/01/2022</i></span>
<span class="cell r" style="left:96.3px;width:30.2px"><i>10:03</i></span>
<span class="cell l" style="left:126.5px;width:57.8px"><i>Espèce</i></span>
<span class="cell l" style="left:184.3px;width:30.1px"><i>CO</i></span>
<span class="cell l clip" style="left:214.4px;width:45.1px"><i>COVERSYL 5</i></span>
<span class="cell r" style="left:259.5px;width:38.2px"><i>92,00</i></span>
<span class="cell c" style="left:297.7px;width:31.2px"><i>1</i></span>
<span class="cell r" style="left:328.9px;width:46.9px"><i>01/09/2024</i></span>
<span class="cell r" style="left:375.8px;width:48.7px"><i>92,00</i></span>
<span class="cell r" style="left:424.5px;width:47.3px"><i>0,00</i></span>
<span class="cell r" style="left:471.8px;width:47.3px"><i>92,00</i></span>
<span class="cell r" style="left:519.1px;width:48.3px"><i>0,00</i></span>
<span class="cell l" style="left:567.4px;width:118.6px"><i style="transform:scaleX(.80)">&lt;CLIENT DE PASSAGE&gt;</i></span>
</div>
<div class="row wh" style="top:344.56px;height:18.76px">
<span class="cell l" style="left:0.0px;width:48.9px"><i>89381/2022</i></span>
<span class="cell r" style="left:48.9px;width:47.4px"><i>03/01/2022</i></span>
<span class="cell r" style="left:96.3px;width:30.2px"><i>10:03</i></span>
<span class="cell l" style="left:126.5px;width:57.8px"><i>Espèce</i></span>
<span class="cell l" style="left:184.3px;width:30.1px"><i>CO</i></span>
<span class="cell l clip" style="left:214.4px;width:45.1px"><i>TRITAZIDE 1</i></span>
<span class="cell r" style="left:259.5px;width:38.2px"><i>63,30</i></span>
<span class="cell c" style="left:297.7px;width:31.2px"><i>1</i></span>
<span class="cell r" style="left:328.9px;width:46.9px"><i>01/03/2023</i></span>
<span class="cell r" style="left:375.8px;width:48.7px"><i>63,30</i></span>
<span class="cell r" style="left:424.5px;width:47.3px"><i>0,00</i></span>
<span class="cell r" style="left:471.8px;width:47.3px"><i>63,30</i></span>
<span class="cell r" style="left:519.1px;width:48.3px"><i>0,00</i></span>
<span class="cell l" style="left:567.4px;width:118.6px"><i style="transform:scaleX(.80)">&lt;CLIENT DE PASSAGE&gt;</i></span>
</div>
<div class="row alt" style="top:363.32px;height:18.76px">
<span class="cell l" style="left:0.0px;width:48.9px"><i>89381/2022</i></span>
<span class="cell r" style="left:48.9px;width:47.4px"><i>03/01/2022</i></span>
<span class="cell r" style="left:96.3px;width:30.2px"><i>10:03</i></span>
<span class="cell l" style="left:126.5px;width:57.8px"><i>Espèce</i></span>
<span class="cell l" style="left:184.3px;width:30.1px"><i>AC</i></span>
<span class="cell l clip" style="left:214.4px;width:45.1px"><i>SPARADRA /</i></span>
<span class="cell r" style="left:259.5px;width:38.2px"><i>1,00</i></span>
<span class="cell c" style="left:297.7px;width:31.2px"><i>5</i></span>
<span class="cell r" style="left:328.9px;width:46.9px"><i></i></span>
<span class="cell r" style="left:375.8px;width:48.7px"><i>5,00</i></span>
<span class="cell r" style="left:424.5px;width:47.3px"><i>0,00</i></span>
<span class="cell r" style="left:471.8px;width:47.3px"><i>5,00</i></span>
<span class="cell r" style="left:519.1px;width:48.3px"><i>0,00</i></span>
<span class="cell l" style="left:567.4px;width:118.6px"><i style="transform:scaleX(.80)">&lt;CLIENT DE PASSAGE&gt;</i></span>
</div>
<div class="row wh" style="top:382.08px;height:18.76px">
<span class="cell l" style="left:0.0px;width:48.9px"><i>89382/2022</i></span>
<span class="cell r" style="left:48.9px;width:47.4px"><i>03/01/2022</i></span>
<span class="cell r" style="left:96.3px;width:30.2px"><i>10:04</i></span>
<span class="cell l" style="left:126.5px;width:57.8px"><i>Espèce</i></span>
<span class="cell l" style="left:184.3px;width:30.1px"><i>CL</i></span>
<span class="cell l clip" style="left:214.4px;width:45.1px"><i>DUOTRAV C0</i></span>
<span class="cell r" style="left:259.5px;width:38.2px"><i>192,10</i></span>
<span class="cell c" style="left:297.7px;width:31.2px"><i>1</i></span>
<span class="cell r" style="left:328.9px;width:46.9px"><i>01/01/2023</i></span>
<span class="cell r" style="left:375.8px;width:48.7px"><i>192,10</i></span>
<span class="cell r" style="left:424.5px;width:47.3px"><i>0,00</i></span>
<span class="cell r" style="left:471.8px;width:47.3px"><i>192,10</i></span>
<span class="cell r" style="left:519.1px;width:48.3px"><i>0,00</i></span>
<span class="cell l" style="left:567.4px;width:118.6px"><i style="transform:scaleX(.80)">&lt;CLIENT DE PASSAGE&gt;</i></span>
</div>
<div class="row alt" style="top:400.84px;height:18.76px">
<span class="cell l" style="left:0.0px;width:48.9px"><i>89382/2022</i></span>
<span class="cell r" style="left:48.9px;width:47.4px"><i>03/01/2022</i></span>
<span class="cell r" style="left:96.3px;width:30.2px"><i>10:04</i></span>
<span class="cell l" style="left:126.5px;width:57.8px"><i>Espèce</i></span>
<span class="cell l" style="left:184.3px;width:30.1px"><i>CO</i></span>
<span class="cell l clip" style="left:214.4px;width:45.1px"><i>AIRLIX 10 MG</i></span>
<span class="cell r" style="left:259.5px;width:38.2px"><i>91,50</i></span>
<span class="cell c" style="left:297.7px;width:31.2px"><i>1</i></span>
<span class="cell r" style="left:328.9px;width:46.9px"><i>01/11/2022</i></span>
<span class="cell r" style="left:375.8px;width:48.7px"><i>91,50</i></span>
<span class="cell r" style="left:424.5px;width:47.3px"><i>0,00</i></span>
<span class="cell r" style="left:471.8px;width:47.3px"><i>91,50</i></span>
<span class="cell r" style="left:519.1px;width:48.3px"><i>0,00</i></span>
<span class="cell l" style="left:567.4px;width:118.6px"><i style="transform:scaleX(.80)">&lt;CLIENT DE PASSAGE&gt;</i></span>
</div>
<div class="vsep" style="left:58.4px;top:232.0px;height:194.6px"></div>
<div class="vsep" style="left:105.8px;top:232.0px;height:194.6px"></div>
<div class="vsep" style="left:136.0px;top:232.0px;height:194.6px"></div>
<div class="vsep" style="left:193.8px;top:232.0px;height:194.6px"></div>
<div class="vsep" style="left:223.9px;top:232.0px;height:194.6px"></div>
<div class="vsep" style="left:269.0px;top:232.0px;height:194.6px"></div>
<div class="vsep" style="left:307.2px;top:232.0px;height:194.6px"></div>
<div class="vsep" style="left:338.4px;top:232.0px;height:194.6px"></div>
<div class="vsep" style="left:385.3px;top:232.0px;height:194.6px"></div>
<div class="vsep" style="left:434.0px;top:232.0px;height:194.6px"></div>
<div class="vsep" style="left:481.3px;top:232.0px;height:194.6px"></div>
<div class="vsep" style="left:528.6px;top:232.0px;height:194.6px"></div>
<div class="vsep" style="left:576.9px;top:232.0px;height:194.6px"></div>
<!-- scrollbar -->
<div class="abs" style="left:696px;top:232px;width:12.300px;height:194px;background:#fff"></div>
<div class="abs" style="left:696.2px;top:232.3px;width:12.100px;height:13.500px;background:#c6c6e0"></div>
<svg class="abs" style="left:700px;top:237px" width="5" height="4" viewBox="0 0 5 4"><path d="M2.500.5L4.700 3.200H.3z" fill="#111"/></svg>
<div class="abs" style="left:696.2px;top:415.7px;width:12.100px;height:10.300px;background:#c6c6e0"></div>
<svg class="abs" style="left:700px;top:419px" width="5" height="4" viewBox="0 0 5 4"><path d="M.3.500h4.400L2.500 3.200z" fill="#111"/></svg>
<!-- total row -->
<div class="abs" style="left:9.500px;top:426.7px;width:686px;height:19.200px;background:#c8c8c8"></div>
<div class="t tot" style="left:10px;top:431.600px;transform:scaleX(.915);transform-origin:0 50%">Total des Colonnes :</div>
<div class="t tot" style="left:300px;top:431.600px;width:35px;text-align:right;transform:scaleX(.93);transform-origin:100% 50%">1 716</div>
<div class="t tot" style="left:386px;top:431.600px;width:45.200px;text-align:right;transform:scaleX(.93);transform-origin:100% 50%">61 015,10</div>
<div class="t tot" style="left:434.700px;top:431.600px;width:43.800px;text-align:right;transform:scaleX(.93);transform-origin:100% 50%">0,00</div>
<div class="t tot" style="left:482px;top:431.600px;width:43.800px;text-align:right;transform:scaleX(.93);transform-origin:100% 50%">61 015,10</div>
<div class="t tot" style="left:529.300px;top:431.600px;width:44.800px;text-align:right;transform:scaleX(.93);transform-origin:100% 50%">0,00</div>
<!-- status bar -->
<div class="abs" style="left:2px;top:455px;width:713px;height:18px;background:#dfdfdf"></div>
<div class="abs" style="left:162.300px;top:457px;width:1px;height:14px;background:#cecece"></div>
<div class="st" style="left:183px">Date :</div>
<div class="st" style="left:215.200px">11/08/2023</div>
<div class="abs" style="left:253.500px;top:457px;width:1px;height:14px;background:#cecece"></div>
<div class="st red" style="left:276px">Journée ouverte :</div>
<div class="st red" style="left:343px">10/01/2022</div>
<div class="abs" style="left:385px;top:457px;width:1px;height:14px;background:#cecece"></div>
<div class="st" style="left:406px">Utilisateur :</div>
<svg class="abs" style="left:0;top:455px" width="717" height="18" viewBox="0 455 717 18">
<rect x="167.200" y="459" width="8.800" height="8.800" fill="#fafafa" stroke="#c8c8c8" stroke-width=".5"/>
<rect x="167.200" y="458.600" width="8.800" height="2.300" fill="#d8473c"/>
<path d="M169.300 457.900v1.500M173.900 457.900v1.500" stroke="#f0f0f0" stroke-width=".9"/>
<text x="171.600" y="466.900" font-size="5.600" font-family="Liberation Sans, sans-serif" fill="#8a8a8a" text-anchor="middle" font-weight="bold">31</text>
<rect x="259.800" y="459" width="8.200" height="8.800" fill="#f4f4f4"/>
<rect x="259.800" y="458.600" width="8.200" height="2.300" fill="#d8473c"/>
<path d="M261.800 457.900v1.500M266 457.900v1.500" stroke="#f0f0f0" stroke-width=".9"/>
<g fill="#2f5f7a"><rect x="262.600" y="461.800" width="1.700" height="1.400"/><rect x="264.700" y="461.800" width="1.700" height="1.400"/><rect x="266.600" y="461.800" width="1.400" height="1.400"/>
<rect x="260.300" y="463.800" width="1.700" height="1.400"/><rect x="262.600" y="463.800" width="1.700" height="1.400"/><rect x="264.700" y="463.800" width="1.700" height="1.400"/><rect x="266.600" y="463.800" width="1.400" height="1.400"/>
<rect x="260.300" y="465.800" width="1.700" height="1.400"/><rect x="262.600" y="465.800" width="1.700" height="1.400"/><rect x="264.700" y="465.800" width="1.700" height="1.400"/></g>
<rect x="393.600" y="458.400" width="5.400" height="5.400" fill="#3b86d6"/>
<path d="M394.600 460h3.400M394.600 461.600h3.400" stroke="#8fc0f0" stroke-width=".7"/>
<circle cx="393.600" cy="462.400" r="1.900" fill="#8a8a8a"/>
<path d="M390.300 467.700c0-2.600 1.300-3.600 3.300-3.600s3.300 1 3.300 3.600z" fill="#8a8a8a"/>
</svg>
<div id="frame"></div><div id="lbar"></div>

</body></html>
